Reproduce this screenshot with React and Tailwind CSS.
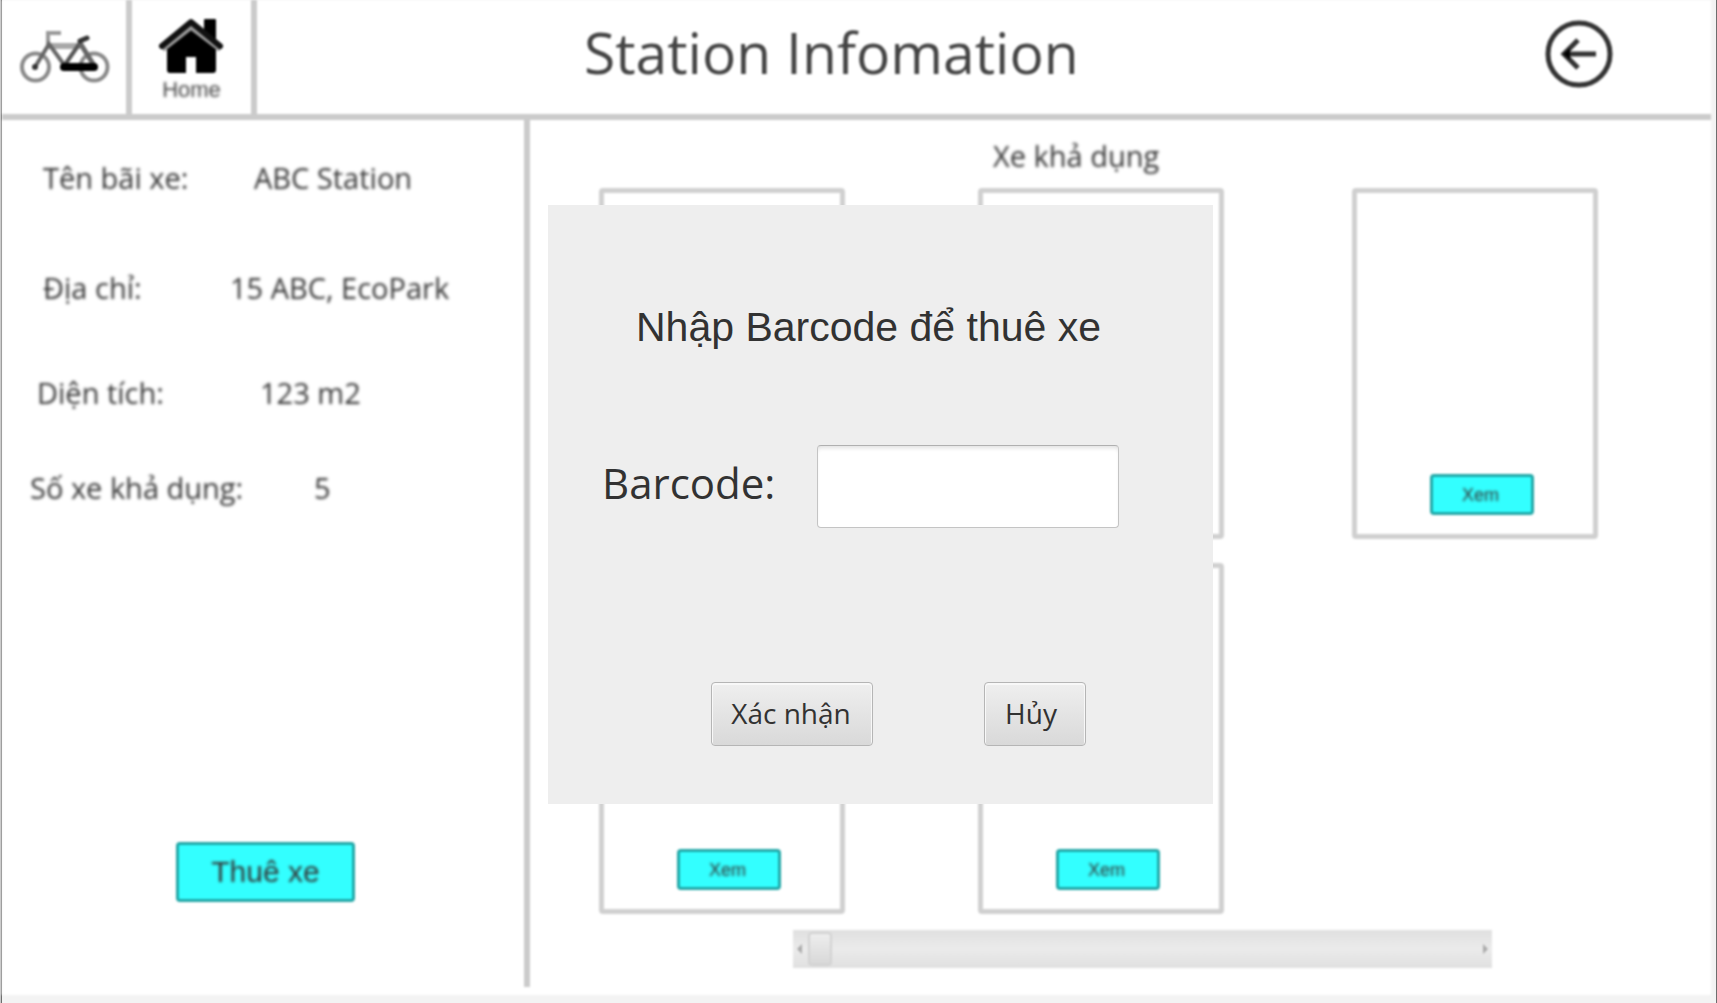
import React from "react";

const details = [
  { label: "Tên bãi xe:", value: "ABC Station", row: "pl-[41px]", labelWidth: "w-[211px]" },
  { label: "Địa chỉ:", value: "15 ABC, EcoPark", row: "mt-[70px] pl-[41px]", labelWidth: "w-[187px]" },
  { label: "Diện tích:", value: "123 m2", row: "mt-[65px] pl-[35px]", labelWidth: "w-[223px]" },
  { label: "Số xe khả dụng:", value: "5", row: "mt-[55px] pl-[28px]", labelWidth: "w-[284px]" },
];

const bikes = [
  { id: 1, action: false },
  { id: 2, action: false },
  { id: 3, action: true },
  { id: 4, action: true },
  { id: 5, action: true },
];

function BikeIcon() {
  return (
    <svg viewBox="0 0 92 54" className="h-[54px] w-[92px]" fill="none">
      <g stroke="#8a8a8a" strokeWidth="4">
        <circle cx="16.500" cy="37" r="13.500" />
        <circle cx="75" cy="37" r="13.500" />
      </g>
      <path d="M29 16H61" stroke="#a8a8a8" strokeWidth="6" />
      <path d="M45 36L61 13" stroke="#555" strokeWidth="4" />
      <path d="M61 13L76 37" stroke="#666" strokeWidth="5" />
      <path d="M29 18V3H42" stroke="#999" strokeWidth="4" />
      <path d="M16 37L30 14L46 36" stroke="#666" strokeWidth="4" />
      <path d="M45 37H75" stroke="#000" strokeWidth="8" strokeLinecap="round" />
      <path d="M61 11L68 8" stroke="#333" strokeWidth="5" strokeLinecap="round" />
      <circle cx="16" cy="37" r="3" fill="#333" />
    </svg>
  );
}

function HouseIcon() {
  return (
    <svg viewBox="0 0 68 56" className="h-[56px] w-[68px]">
      <path d="M47 2H57V22L47 14Z" fill="#000" stroke="#000" strokeWidth="2" strokeLinejoin="round" />
      <path d="M9 28L33 10L58 28V52Q58 55 55 55H38V39H28V55H12Q9 55 9 52Z" fill="#000" />
      <path d="M5 32L33 10L62 32" fill="none" stroke="#999" strokeWidth="4" />
      <path d="M4 28L33 4L62 28" fill="none" stroke="#111" strokeWidth="6" strokeLinecap="round" strokeLinejoin="round" />
    </svg>
  );
}

function BackIcon() {
  return (
    <svg viewBox="0 0 68 68" className="h-[68px] w-[68px]" fill="none" stroke="#333" strokeWidth="5">
      <circle cx="34" cy="34" r="31" />
      <path d="M19 34H51" />
      <path d="M33 20L19 34L33 48" />
      <path d="M18 34L25 28V40Z" fill="#000" stroke="none" />
    </svg>
  );
}

function BikeCard({ action }) {
  return (
    <article className="flex h-[351px] w-[246px] flex-col justify-end rounded-sm border-[5px] border-[#d0d0d0] pb-[19px] pl-[73px]">
      {action && (
        <button className="h-[41px] w-[104px] rounded-sm border-[3px] border-[#22a8a8] bg-[#33ffff] pr-[3px] font-['Liberation_Sans',sans-serif] text-[18px] leading-none text-[#333]">
          <span className="block blur-[1px]">Xem</span>
        </button>
      )}
    </article>
  );
}

function StationScreen() {
  return (
    <div className="mr-[5px] flex flex-1 flex-col bg-white blur-[1px]">
      <header className="flex h-[120px] shrink-0 items-stretch border-b-[6px] border-[#cbcbcb]">
        <a href="#bikes" aria-label="Xe" className="flex w-[130px] items-center border-r-[6px] border-[#cbcbcb] pl-[17px]">
          <BikeIcon />
        </a>
        <a href="#home" className="flex w-[125px] flex-col items-center border-r-[6px] border-[#cbcbcb] pt-[18px] font-['Liberation_Sans',sans-serif] text-[22px] leading-8 text-[#444]">
          <HouseIcon />
          <span className="blur-[1px]">Home</span>
        </a>
        <h1 className="flex-1 pt-3 pr-[16px] pl-[327px] font-['Open_Sans',sans-serif] text-[57px] leading-[80px] whitespace-nowrap text-[#444]">
          Station Infomation
        </h1>
        <button aria-label="Quay lại" className="mr-[98px] self-start pt-[20px]">
          <BackIcon />
        </button>
      </header>
      <div className="flex flex-1">
        <aside className="mb-[8px] w-[528px] shrink-0 border-r-[6px] border-[#cbcbcb] pt-[38px] font-['Open_Sans',sans-serif] text-[29px] leading-10 text-[#333]">
          <dl className="blur-[1px]">
            {details.map((d) => (
              <div key={d.label} className={"flex whitespace-nowrap " + d.row}>
                <dt className={"shrink-0 " + d.labelWidth}>{d.label}</dt>
                <dd>{d.value}</dd>
              </div>
            ))}
          </dl>
          <button className="mt-[334px] ml-[174px] h-[60px] w-[179px] rounded-sm border-[3px] border-[#22a8a8] bg-[#33ffff] font-['Liberation_Sans',sans-serif] text-[30px] leading-none text-[#333]">
            <span className="block blur-[1px]">Thuê xe</span>
          </button>
        </aside>
        <main className="min-w-0 flex-1 pt-4 pl-[69px]">
          <h2 className="pl-[394px] font-['Open_Sans',sans-serif] text-[29px] leading-10 text-[#333] blur-[1px]">Xe khả dụng</h2>
          <div id="bikes" className="mt-3 grid grid-cols-[379px_374px_246px] gap-y-6">
            {bikes.map((bike) => (
              <BikeCard key={bike.id} action={bike.action} />
            ))}
          </div>
          <div
            role="scrollbar"
            aria-label="Cuộn danh sách xe"
            aria-controls="bikes"
            aria-valuenow={0}
            className="mt-[16px] ml-[194px] flex h-[38px] w-[699px] items-center justify-between bg-linear-to-b from-[#e0e0e0] via-[#ebebeb] to-[#e0e0e0] px-[4px]"
          >
            <div className="flex items-center gap-[6px]">
              <svg viewBox="0 0 5 10" className="h-[10px] w-[5px]" fill="#aaa">
                <path d="M5 0V10L0 5Z" />
              </svg>
              <div className="h-[34px] w-[24px] rounded-sm border-2 border-[#d2d2d2] bg-linear-to-b from-[#eeeeee] to-[#d8d8d8]" />
            </div>
            <svg viewBox="0 0 5 10" className="h-[10px] w-[5px]" fill="#aaa">
              <path d="M0 0V10L5 5Z" />
            </svg>
          </div>
        </main>
      </div>
    </div>
  );
}

function RentDialog() {
  const buttonStyle =
    "h-[64px] rounded-[4px] border border-[#b5b5b5] bg-linear-to-b from-[#efefef] to-[#d9d9d9] font-['Open_Sans',sans-serif] text-[28px] leading-none text-[#323232] shadow-[inset_0_1px_0_1px_#f8f8f8]";
  return (
    <div className="absolute inset-0 flex items-center justify-center pt-[6px] pl-[44px]">
      <form
        role="dialog"
        aria-labelledby="rent-title"
        className="h-[599px] w-[665px] bg-[#eeeeee] text-[#323232]"
        onSubmit={(e) => e.preventDefault()}
      >
        <h2 id="rent-title" className="pt-[97px] pl-[88px] font-['Liberation_Sans',sans-serif] text-[41px] leading-[50px] whitespace-nowrap">
          Nhập Barcode để thuê xe
        </h2>
        <div className="mt-[93px] flex items-center pl-[54px]">
          <label htmlFor="barcode" className="w-[215px] pb-[8px] font-['Open_Sans',sans-serif] text-[42px] leading-[60px]">
            Barcode:
          </label>
          <input
            id="barcode"
            type="text"
            className="h-[83px] w-[302px] rounded-[4px] border border-[#c4c4c4] border-t-[#b0b0b0] bg-white px-4 text-[30px] shadow-[inset_0_4px_4px_-2px_#e0e0e0] outline-none"
          />
        </div>
        <div className="mt-[154px] flex gap-[111px] pl-[163px]">
          <button type="submit" className={"w-[162px] pr-[2px] pb-[2px] " + buttonStyle}>Xác nhận</button>
          <button type="button" className={"w-[102px] pr-[8px] pb-[2px] " + buttonStyle}>Hủy</button>
        </div>
      </form>
    </div>
  );
}

export default function App() {
  return (
    <div className="flex min-h-screen border-l border-[#c8c8c8]">
      <div className="relative flex flex-1 border-x border-[#6e6e6e] bg-[#f3f3f3] pb-[8px]">
        <StationScreen />
      </div>
      <RentDialog />
    </div>
  );
}
